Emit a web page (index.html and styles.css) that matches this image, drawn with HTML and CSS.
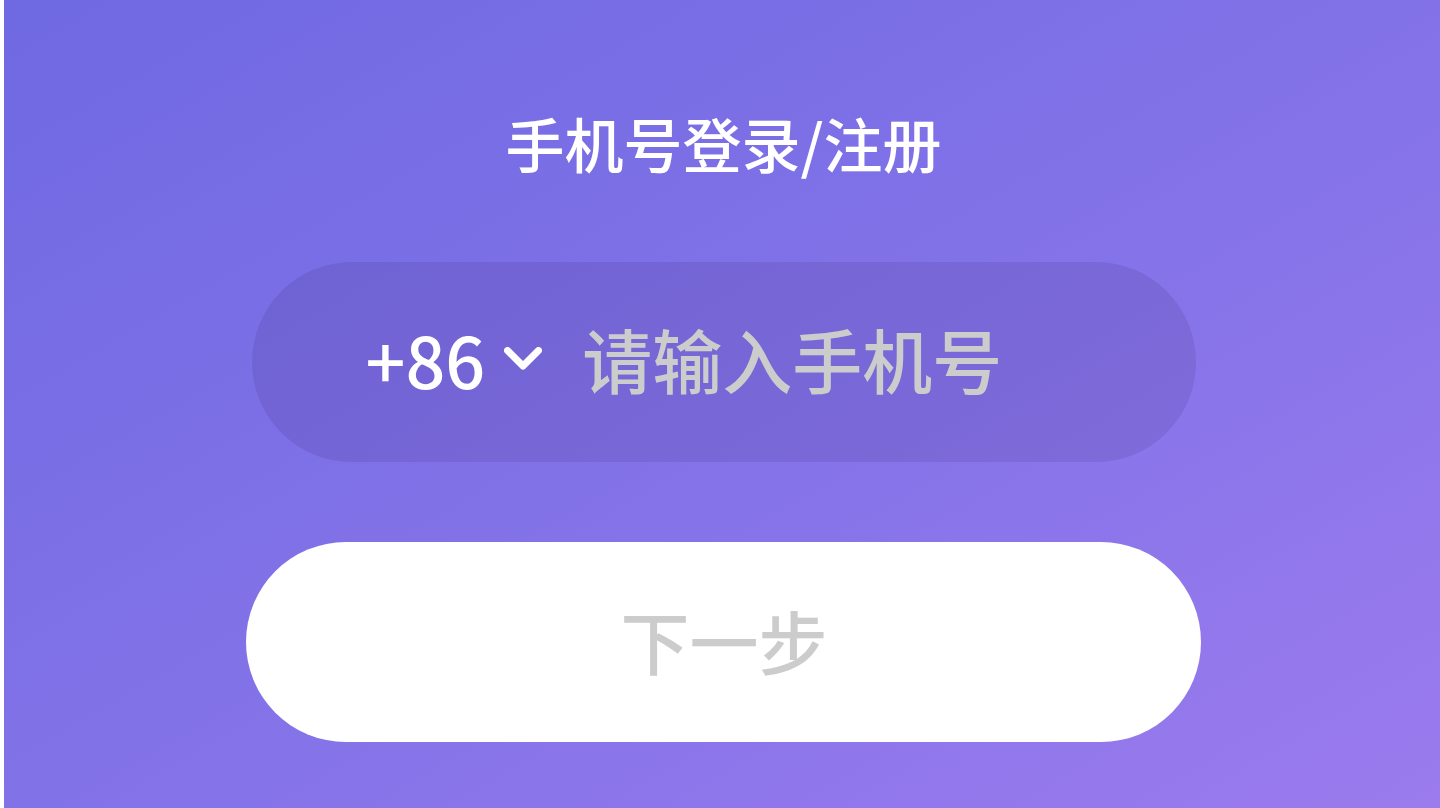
FILE: index.html
```html
<!DOCTYPE html>
<html lang="zh-CN">
<head>
<meta charset="utf-8">
<title>手机号登录/注册</title>
<link rel="stylesheet" href="styles.css">
</head>
<body>
<main class="page">
  <h1 class="title">手机号登录/注册</h1>
  <div class="phone-field">
    <button class="area-code" type="button">
      <span class="code">+86</span>
      <svg class="chevron" width="38" height="23" viewBox="0 0 38 23" aria-hidden="true">
        <polyline points="3.5,3.5 19,19 34.5,3.5" fill="none" stroke="#ffffff" stroke-width="7" stroke-linecap="round" stroke-linejoin="round"/>
      </svg>
    </button>
    <input class="phone-input" type="tel" placeholder="请输入手机号">
  </div>
  <button class="next-btn" type="button">下一步</button>
</main>
</body>
</html>
```

FILE: styles.css
```css
html, body {
  margin: 0;
  padding: 0;
  background: #ffffff;
}

body {
  font-family: "Noto Sans CJK SC", "Noto Sans", sans-serif;
}

.page {
  margin-left: 4px;
  padding-left: 3px;
  box-sizing: border-box;
  height: 808px;
  overflow: hidden;
  background: linear-gradient(150deg, #6f69e2 0%, #8272e8 50%, #9b7bee 100%);
  display: flex;
  flex-direction: column;
  align-items: center;
}

.title {
  margin: 113px 0 0 0;
  font-size: 59px;
  line-height: 59px;
  font-weight: 500;
  color: #ffffff;
  letter-spacing: 0;
}

.phone-field {
  margin-top: 90px;
  width: 944px;
  height: 200px;
  box-sizing: border-box;
  border-radius: 100px;
  background: rgba(30, 10, 70, 0.1);
  display: flex;
  align-items: center;
  padding: 0 60px 6px 114px;
}

.area-code {
  display: flex;
  align-items: center;
  gap: 19px;
  padding: 0;
  margin: 0;
  border: 0;
  background: transparent;
  color: #ffffff;
  font-family: inherit;
  font-weight: 500;
  cursor: pointer;
}

.code {
  font-size: 70px;
  line-height: 70px;
}

.chevron {
  display: block;
  margin-top: -1px;
}

.phone-input {
  flex: 1;
  min-width: 0;
  margin-left: 40px;
  padding: 0;
  border: 0;
  outline: none;
  background: transparent;
  font-family: inherit;
  font-weight: 500;
  font-size: 70px;
  line-height: 90px;
  height: 90px;
  color: #ffffff;
}

.phone-input::placeholder {
  color: #cccccc;
  opacity: 1;
}

.next-btn {
  margin-top: 80px;
  width: 955px;
  height: 200px;
  border: 0;
  border-radius: 100px;
  background: #ffffff;
  color: #cccccc;
  font-family: inherit;
  font-weight: 500;
  font-size: 69px;
  line-height: 69px;
  padding: 0 0 4px 1px;
  cursor: pointer;
}
```
